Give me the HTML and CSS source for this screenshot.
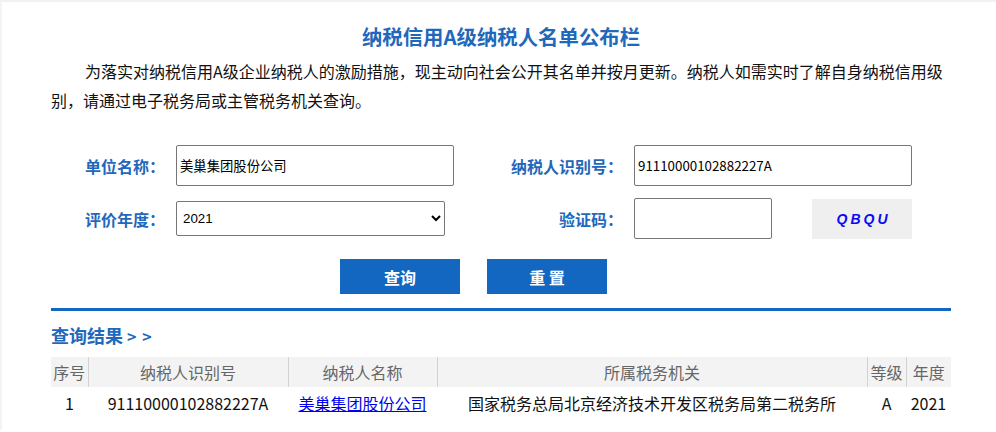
FILE: index.html
```html
<!DOCTYPE html>
<html lang="zh-CN">
<head>
<meta charset="utf-8">
<title>纳税信用A级纳税人名单公布栏</title>
<link rel="stylesheet" href="styles.css">
</head>
<body>
<div class="page">
  <div class="content">
    <h1 class="title">纳税信用A级纳税人名单公布栏</h1>
    <p class="intro">为落实对纳税信用A级企业纳税人的激励措施，现主动向社会公开其名单并按月更新。纳税人如需实时了解自身纳税信用级别，请通过电子税务局或主管税务机关查询。</p>

    <form class="search">
      <label class="lbl">单位名称：</label>
      <input class="field" type="text" value="美巢集团股份公司">
      <label class="lbl">纳税人识别号：</label>
      <input class="field" type="text" value="91110000102882227A">

      <label class="lbl">评价年度：</label>
      <div class="cell"><select class="year"><option>2021</option><option>2020</option><option>2019</option></select></div>
      <label class="lbl">验证码：</label>
      <div class="captcha-cell">
        <input class="captcha-input" type="text">
        <div class="captcha">QBQU</div>
      </div>
    </form>

    <div class="actions">
      <button class="btn" type="button">查询</button>
      <button class="btn" type="button">重 置</button>
    </div>

    <div class="divider"></div>

    <h2 class="result-title">查询结果 <span class="arrows">&gt; &gt;</span></h2>

    <table class="result">
      <colgroup>
        <col class="c1"><col class="c2"><col class="c3"><col class="c4"><col class="c5"><col class="c6">
      </colgroup>
      <thead>
        <tr><th>序号</th><th>纳税人识别号</th><th>纳税人名称</th><th>所属税务机关</th><th>等级</th><th>年度</th></tr>
      </thead>
      <tbody>
        <tr><td>1</td><td>91110000102882227A</td><td><a href="#">美巢集团股份公司</a></td><td>国家税务总局北京经济技术开发区税务局第二税务所</td><td>A</td><td>2021</td></tr>
      </tbody>
    </table>
  </div>
</div>
</body>
</html>
```

FILE: styles.css
```css
html, body {
  margin: 0;
  padding: 0;
  background: #fff;
}
body {
  font-family: "Noto Sans CJK SC", "Liberation Sans", sans-serif;
  color: #111;
}
.page {
  border-top: 2px solid #f1f1f1;
  border-left: 2px solid #f3f3f3;
  min-height: 430px;
  box-sizing: border-box;
}
.content {
  width: 900px;
  margin-left: 49px;
  padding-top: 19px;
}
.title {
  margin: 0;
  text-align: center;
  font-size: 20.4px;
  line-height: 30px;
  font-weight: bold;
  color: #1f68bb;
}
.intro {
  margin: 6px 0 0;
  font-size: 16px;
  line-height: 29px;
  text-indent: 34px;
  color: #111;
}
.search {
  display: grid;
  grid-template-columns: 114px 278px 158px 278px;
  grid-template-rows: 41px 41px;
  column-gap: 11px;
  row-gap: 12px;
  align-items: center;
  margin-top: 30px;
}
.lbl {
  text-align: right;
  font-size: 16px;
  font-weight: bold;
  color: #1f68bb;
  white-space: nowrap;
}
.field {
  box-sizing: border-box;
  width: 278px;
  height: 41px;
  border: 1px solid #767676;
  border-radius: 2px;
  padding: 1px 3px;
  font-family: "Noto Sans CJK SC", "Liberation Sans", sans-serif;
  font-size: 13.333px;
  color: #000;
}
.year {
  box-sizing: border-box;
  width: 269px;
  height: 35px;
  border: 1px solid #767676;
  border-radius: 2px;
  background: #fff;
  font-family: "Liberation Sans", sans-serif;
  font-size: 13.333px;
  color: #000;
  padding-left: 2px;
}
.captcha-cell {
  display: flex;
  align-items: center;
  gap: 40px;
}
.captcha-input {
  box-sizing: border-box;
  width: 138px;
  height: 41px;
  border: 1px solid #767676;
  border-radius: 2px;
}
.captcha {
  width: 100px;
  height: 40px;
  background: #efefef;
  display: flex;
  align-items: center;
  justify-content: center;
  font-family: "Liberation Sans", sans-serif;
  font-style: italic;
  font-weight: bold;
  font-size: 14px;
  letter-spacing: 3px;
  color: #0a0af5;
  padding-left: 3px;
  box-sizing: border-box;
}
.actions {
  display: flex;
  gap: 27px;
  padding-left: 289px;
  margin-top: 20px;
}
.btn {
  width: 120px;
  height: 35px;
  border: none;
  background: #1467c1;
  color: #fff;
  font-family: "Noto Sans CJK SC", sans-serif;
  font-size: 16px;
  font-weight: bold;
  padding: 0;
}
.divider {
  height: 3px;
  background: #1467c1;
  margin-top: 14px;
}
.result-title {
  margin: 12px 0 0;
  font-size: 18px;
  line-height: 24px;
  font-weight: bold;
  color: #1f68bb;
}
.arrows {
  font-size: 16px;
  letter-spacing: 1px;
}
.result {
  width: 900px;
  border-collapse: collapse;
  table-layout: fixed;
  margin-top: 9px;
  font-size: 16px;
}
.c1 { width: 37px; }
.c2 { width: 200px; }
.c3 { width: 149px; }
.c4 { width: 430px; }
.c5 { width: 39px; }
.c6 { width: 45px; }
.result th {
  background: #f3f3f3;
  color: #666;
  font-weight: normal;
  height: 30px;
  padding: 0;
  text-align: center;
  border-left: 1px solid #d2d2d2;
  white-space: nowrap;
}
.result th:first-child {
  border-left: none;
}
.result td {
  height: 32px;
  padding: 0;
  text-align: center;
  color: #111;
  white-space: nowrap;
}
.result a {
  color: #0000ee;
  text-decoration: underline;
}
```
